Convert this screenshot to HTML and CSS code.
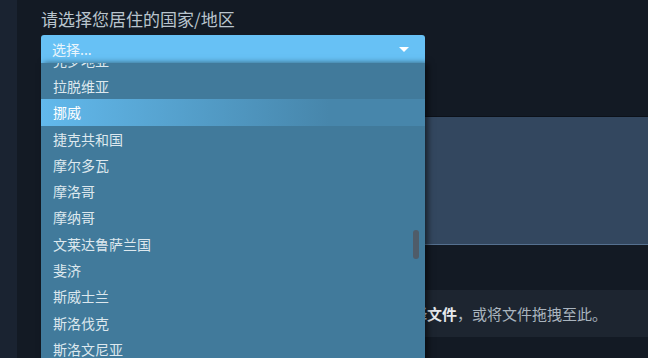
FILE: index.html
```html
<!DOCTYPE html>
<html lang="zh-CN">
<head>
  <meta charset="UTF-8" />
  <meta name="viewport" content="width=device-width, initial-scale=1.0"/>
  <title>国家/地区</title>
  <link rel="stylesheet" href="styles.css">
</head>
<body>
  <div class="page">
    <div class="side"></div>
    <div class="content">
      <label class="label">请选择您居住的国家/地区</label>

      <!-- Select abierto -->
      <div class="select">
        <div class="select-head">
          <span>选择...</span>
          <span class="arrow"></span>
        </div>
        <div class="select-list">
          <ul class="options">
            <li>克罗地亚</li>
            <li>拉脱维亚</li>
            <li class="active">挪威</li>
            <li>捷克共和国</li>
            <li>摩尔多瓦</li>
            <li>摩洛哥</li>
            <li>摩纳哥</li>
            <li>文莱达鲁萨兰国</li>
            <li>斐济</li>
            <li>斯威士兰</li>
            <li>斯洛伐克</li>
            <li>斯洛文尼亚</li>
            <li>所罗门群岛</li>
          </ul>
          <div class="thumb"></div>
        </div>
      </div>

      <div class="panel"></div>
      <div class="upload">点击此处<strong>选择文件</strong>，或将文件拖拽至此。</div>
    </div>
  </div>
</body>
</html>
```

FILE: styles.css
```css
body {
  margin: 0;
  background: #131a24;
  font-family: "Noto Sans CJK SC", sans-serif;
  overflow: hidden;
}

.page {
  display: flex;
  height: 358px;
}

.side {
  width: 17px;
  flex-shrink: 0;
  background: #1a2331;
}

.content {
  flex: 1;
  padding-top: 8px;
  padding-left: 24px;
}

.label {
  display: block;
  font-size: 17px;
  line-height: 22px;
  color: #b9c4cd;
}

.select {
  position: relative;
  width: 384px;
  margin-top: 5px;
  z-index: 2;
}

.select-head {
  display: flex;
  align-items: center;
  justify-content: space-between;
  height: 28px;
  padding-left: 11px;
  background: #67c1f5;
  border-radius: 3px 3px 0 0;
  color: #eaf5fc;
  font-size: 14px;
}

.arrow {
  margin-right: 16px;
  border-left: 5.5px solid transparent;
  border-right: 5.5px solid transparent;
  border-top: 5px solid #ffffff;
}

.select-list {
  position: absolute;
  top: 28px;
  left: 0;
  width: 384px;
  height: 300px;
  overflow: hidden;
  background: #417a9b;
  box-shadow: 3px 0 6px rgba(0, 0, 0, 0.55);
}

.options {
  list-style: none;
  margin: -16.3px 0 0 0;
  padding: 0;
}

.options li {
  height: 26.3px;
  line-height: 26.3px;
  padding-left: 12px;
  font-size: 14px;
  color: #dde8ee;
}

.options li.active {
  background: linear-gradient(to right, #62b9ec, #4786ab 75%);
  color: #ffffff;
}

.thumb {
  position: absolute;
  left: 372px;
  top: 167px;
  width: 6px;
  height: 29px;
  border-radius: 3px;
  background: #4f5c69;
}

.panel {
  margin-top: 53px;
  height: 127px;
  background: #33475f;
  border-top: 1px solid #0c1119;
  border-bottom: 1px solid #55708f;
}

.upload {
  margin-top: 45px;
  height: 47px;
  line-height: 47px;
  padding-right: 41px;
  text-align: right;
  background: #1d2530;
  color: #a9b4be;
  font-size: 15px;
}

.upload strong {
  color: #e6eaee;
}
```
